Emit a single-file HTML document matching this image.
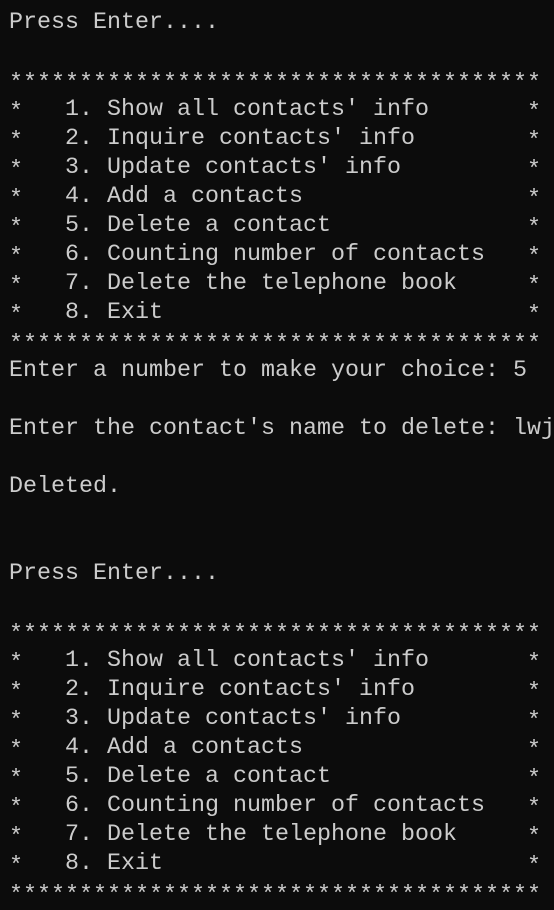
<!DOCTYPE html>
<html><head><style>
html,body{margin:0;padding:0;background:#0c0c0c;width:554px;height:910px;overflow:hidden}
pre{margin:0;padding:9px 0 0 9px;font-family:"Liberation Mono",monospace;font-size:23.33px;line-height:29px;color:#cccccc;white-space:pre}
.s{position:relative;top:3px}
</style></head><body><pre>Press Enter....

<span class="s">**************************************</span>
<span class="s">*</span>   1. Show all contacts' info       <span class="s">*</span>
<span class="s">*</span>   2. Inquire contacts' info        <span class="s">*</span>
<span class="s">*</span>   3. Update contacts' info         <span class="s">*</span>
<span class="s">*</span>   4. Add a contacts                <span class="s">*</span>
<span class="s">*</span>   5. Delete a contact              <span class="s">*</span>
<span class="s">*</span>   6. Counting number of contacts   <span class="s">*</span>
<span class="s">*</span>   7. Delete the telephone book     <span class="s">*</span>
<span class="s">*</span>   8. Exit                          <span class="s">*</span>
<span class="s">**************************************</span>
Enter a number to make your choice: 5

Enter the contact's name to delete: lwj

Deleted.


Press Enter....

<span class="s">**************************************</span>
<span class="s">*</span>   1. Show all contacts' info       <span class="s">*</span>
<span class="s">*</span>   2. Inquire contacts' info        <span class="s">*</span>
<span class="s">*</span>   3. Update contacts' info         <span class="s">*</span>
<span class="s">*</span>   4. Add a contacts                <span class="s">*</span>
<span class="s">*</span>   5. Delete a contact              <span class="s">*</span>
<span class="s">*</span>   6. Counting number of contacts   <span class="s">*</span>
<span class="s">*</span>   7. Delete the telephone book     <span class="s">*</span>
<span class="s">*</span>   8. Exit                          <span class="s">*</span>
<span class="s">**************************************</span></pre></body></html>
